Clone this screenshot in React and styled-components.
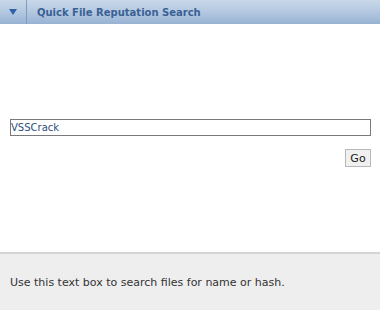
import React from 'react';
import styled, { createGlobalStyle } from 'styled-components';

const Global = createGlobalStyle`
  html, body {
    margin: 0;
    padding: 0;
    background: #fff;
  }
  body {
    font-family: Tahoma, "DejaVu Sans", Verdana, sans-serif;
  }
`;

const Panel = styled.div`
  width: 380px;
  height: 310px;
  display: flex;
  flex-direction: column;
  overflow: hidden;
`;

const Header = styled.div`
  height: 24px;
  display: flex;
  align-items: stretch;
  background: linear-gradient(to bottom, #c9d8e9 0%, #b3c8e0 50%, #97b2d3 100%);
`;

const Toggle = styled.div`
  width: 26px;
  display: flex;
  align-items: center;
  justify-content: center;
  border-right: 1px solid #7e9dc4;
`;

const Title = styled.div`
  display: flex;
  align-items: center;
  padding-left: 10px;
  font-size: 10px;
  font-weight: bold;
  color: #3a6195;
`;

const Body = styled.div`
  flex: 1;
  display: flex;
  flex-direction: column;
  align-items: flex-end;
  padding: 95px 9px 0 10px;
`;

const SearchInput = styled.input`
  box-sizing: border-box;
  width: 100%;
  height: 17px;
  margin: 0;
  padding: 0;
  border: 1px solid #7a7a7a;
  font-family: "DejaVu Sans", Verdana, sans-serif;
  font-size: 10px;
  color: #2c4f7c;
  caret-color: #000;
  outline: none;
`;

const GoButton = styled.button`
  box-sizing: border-box;
  margin-top: 13px;
  width: 26px;
  height: 18px;
  padding: 0;
  border: 1px solid #b8b8b8;
  background: #f0f0f0;
  font-family: "DejaVu Sans", Verdana, sans-serif;
  font-size: 11px;
  color: #222;
`;

const Footer = styled.div`
  height: 56px;
  border-top: 2px solid #d4d4d4;
  background: #eeeeee;
  display: flex;
  align-items: center;
  padding-left: 10px;
  font-size: 11px;
  color: #333;
`;

export default function App() {
  return (
    <Panel>
      <Global />
      <Header>
        <Toggle>
          <svg width="8" height="6" viewBox="0 0 8 6">
            <polygon points="0,0 8,0 4,6" fill="#2d62a6" />
          </svg>
        </Toggle>
        <Title>Quick File Reputation Search</Title>
      </Header>
      <Body>
        <SearchInput defaultValue="VSSCrack" autoFocus />
        <GoButton>Go</GoButton>
      </Body>
      <Footer>Use this text box to search files for name or hash.</Footer>
    </Panel>
  );
}
